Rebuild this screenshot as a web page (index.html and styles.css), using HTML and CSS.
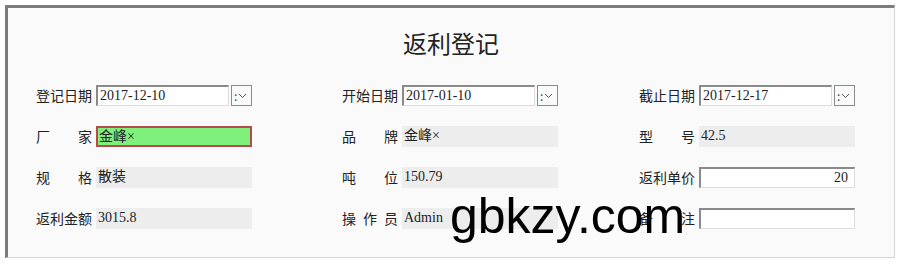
FILE: index.html
```html
<!DOCTYPE html>
<html>
<head>
	<title>返利登记</title>
	<link rel="stylesheet" href="styles.css">
</head>
<body>
	<div class="panel">
		<h1 class="title">返利登记</h1>
		<div class="form-grid">
			<!-- row 1 -->
			<div class="field">
				<span class="label">登记日期</span>
				<div class="date-box">
					<span class="input">2017-12-10</span>
					<span class="drop">:<svg width="9" height="6" viewBox="0 0 9 6"><path d="M1 1 L4.5 4.5 L8 1" fill="none" stroke="#555" stroke-width="1"/></svg></span>
				</div>
			</div>
			<div class="field">
				<span class="label">开始日期</span>
				<div class="date-box">
					<span class="input">2017-01-10</span>
					<span class="drop">:<svg width="9" height="6" viewBox="0 0 9 6"><path d="M1 1 L4.5 4.5 L8 1" fill="none" stroke="#555" stroke-width="1"/></svg></span>
				</div>
			</div>
			<div class="field">
				<span class="label">截止日期</span>
				<div class="date-box">
					<span class="input">2017-12-17</span>
					<span class="drop">:<svg width="9" height="6" viewBox="0 0 9 6"><path d="M1 1 L4.5 4.5 L8 1" fill="none" stroke="#555" stroke-width="1"/></svg></span>
				</div>
			</div>

			<!-- row 2 -->
			<div class="field">
				<span class="label spread"><i>厂</i><i>家</i></span>
				<span class="box active">金峰×</span>
			</div>
			<div class="field">
				<span class="label spread"><i>品</i><i>牌</i></span>
				<span class="box readonly">金峰×</span>
			</div>
			<div class="field">
				<span class="label spread"><i>型</i><i>号</i></span>
				<span class="box readonly">42.5</span>
			</div>

			<!-- row 3 -->
			<div class="field">
				<span class="label spread"><i>规</i><i>格</i></span>
				<span class="box readonly">散装</span>
			</div>
			<div class="field">
				<span class="label spread"><i>吨</i><i>位</i></span>
				<span class="box readonly">150.79</span>
			</div>
			<div class="field">
				<span class="label">返利单价</span>
				<span class="box input num">20</span>
			</div>

			<!-- row 4 -->
			<div class="field">
				<span class="label">返利金额</span>
				<span class="box readonly">3015.8</span>
			</div>
			<div class="field">
				<span class="label spread"><i>操</i><i>作</i><i>员</i></span>
				<span class="box readonly">Admin</span>
			</div>
			<div class="field">
				<span class="label spread"><i>备</i><i>注</i></span>
				<span class="box input"></span>
			</div>
		</div>
		<div class="watermark">gbkzy.com</div>
	</div>
</body>
</html>
```

FILE: styles.css
```css
/* page */
body {
	margin: 0;
	padding: 5px 0 0 5px;
	background: #ffffff;
	font-family: "Noto Sans CJK SC", sans-serif;
	color: #222;
}
.panel {
	position: relative;
	width: 886px;
	height: 249px;
	box-sizing: content-box;
	background: #fafafa;
	border-top: 3px solid #7c7c7c;
	border-left: 3px solid #7c7c7c;
	border-right: 1px solid #d4d4d4;
	border-bottom: 1px solid #d4d4d4;
}
.title {
	margin: 0;
	padding-top: 19px;
	height: 32px;
	line-height: 32px;
	font-size: 24px;
	font-weight: normal;
	text-align: center;
	color: #222;
}

/* form */
.form-grid {
	display: grid;
	grid-template-columns: 306px 297px 220px;
	grid-auto-rows: 21px;
	row-gap: 20px;
	margin-top: 26px;
	padding-left: 28px;
}
.field {
	display: flex;
	align-items: center;
}
.label {
	width: 60px;
	flex: none;
	font-size: 14px;
	line-height: 21px;
	white-space: nowrap;
}
.label.spread {
	display: flex;
	justify-content: space-between;
	width: 56px;
	margin-right: 4px;
}
.label.spread i {
	font-style: normal;
}
.box, .input {
	font-family: "Liberation Serif", "Noto Sans CJK SC", serif;
	font-size: 14px;
	color: #222;
}
.box {
	display: block;
	flex: none;
	width: 156px;
	height: 21px;
	box-sizing: border-box;
	line-height: 17px;
	padding: 0 2px;
	white-space: nowrap;
}
.readonly {
	background: #ededed;
	padding-top: 1px;
}
.active {
	background: #80f07c;
	border: 2px solid #b84a4a;
	line-height: 17px;
	padding: 0 1px;
}
.input {
	background: #fff;
	border-top: 2px solid #8a8a8a;
	border-left: 2px solid #8a8a8a;
	border-right: 1px solid #dcdcdc;
	border-bottom: 1px solid #dcdcdc;
	line-height: 17px;
}
.num {
	text-align: right;
	padding-right: 6px;
}

/* date picker */
.date-box {
	display: flex;
	flex: none;
	gap: 2px;
	height: 21px;
}
.date-box .input {
	display: block;
	width: 133px;
	box-sizing: border-box;
	padding: 0 2px;
}
.drop {
	display: flex;
	align-items: center;
	gap: 1px;
	width: 21px;
	box-sizing: border-box;
	border: 1px solid #8a8a8a;
	background: #fafafa;
	font-size: 12px;
	line-height: 12px;
	padding-left: 2px;
	color: #444;
}

/* overlay text */
.watermark {
	position: absolute;
	left: 442px;
	top: 178px;
	font-family: "Liberation Sans", sans-serif;
	font-size: 50px;
	line-height: 60px;
	color: #000;
}
```
